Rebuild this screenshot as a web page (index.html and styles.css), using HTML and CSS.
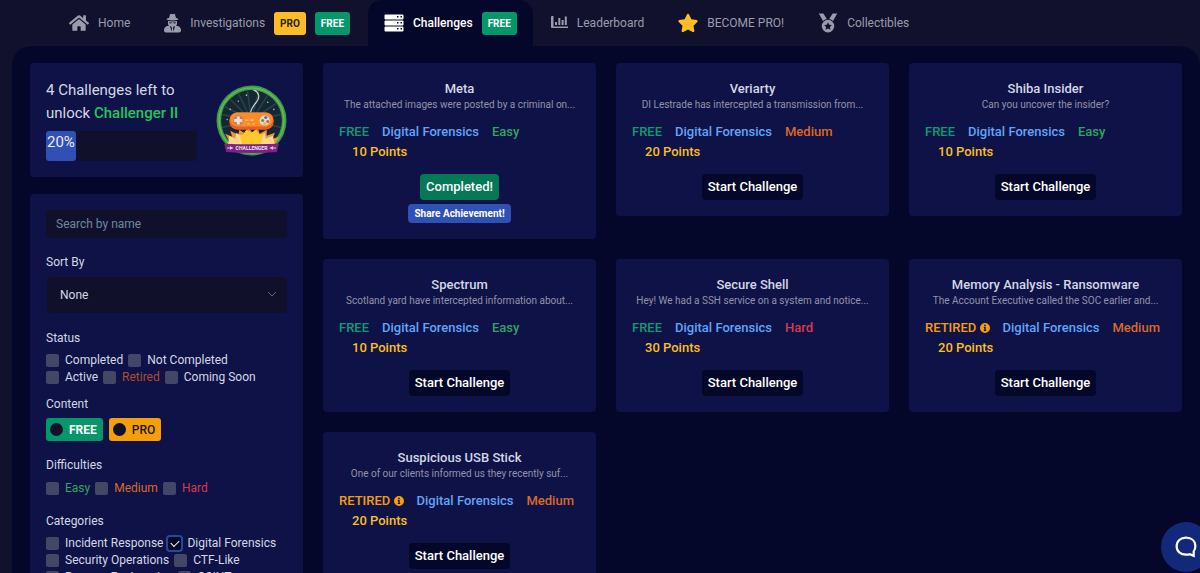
FILE: index.html
```html
<!DOCTYPE html>
<html lang="en">
<head>
    <meta charset="UTF-8">
    <meta name="viewport" content="width=device-width, initial-scale=1.0">
    <title>Challenges</title>
    <link rel="stylesheet" href="styles.css">
</head>
<body>
    <nav class="top-nav">
        <a class="nav-item" href="#home">
            <svg class="icon" viewBox="0 0 576 512"><path d="M280.37 148.26L96 300.11V464a16 16 0 0 0 16 16l112.06-.29a16 16 0 0 0 15.92-16V368a16 16 0 0 1 16-16h64a16 16 0 0 1 16 16v95.64a16 16 0 0 0 16 16.05L464 480a16 16 0 0 0 16-16V300L295.67 148.26a12.19 12.19 0 0 0-15.3 0zM571.6 251.47L488 182.56V44.05a12 12 0 0 0-12-12h-56a12 12 0 0 0-12 12v72.61L318.47 43a48 48 0 0 0-61 0L4.34 251.47a12 12 0 0 0-1.6 16.9l25.5 31A12 12 0 0 0 45.15 301l235.22-193.74a12.19 12.19 0 0 1 15.3 0L530.9 301a12 12 0 0 0 16.9-1.6l25.5-31a12 12 0 0 0-1.7-16.93z"/></svg>
            Home
        </a>
        <a class="nav-item" href="#investigations">
            <svg class="icon icon-narrow" viewBox="0 0 17 20"><path d="M5 5 6 1.4Q6.500.200 8.500 1.200 10.500.200 11 1.400L12 5Q14.500 5.500 14.500 6.200 14 7.200 8.500 7.400 3 7.200 2.500 6.200 2.500 5.500 5 5z"/><path fill-rule="evenodd" d="M4 8q4.500.8 9 0v2.500q0 1.500-1 2.500h2q3 1 3 4.500 0 2-2 2H2q-2 0-2-2Q0 14 3 13h2q-1-1-1-2.500zm1 1.200q.5 1.800 2 1.300l1.200-1h.6l1.200 1q1.500.5 2-1.300-3.500.5-7 0zM6 13l1.500 5.500.5-3.500-.7-1.500zm5 0-1.300.5L9 15l.5 3.500z"/></svg>
            Investigations
            <span class="badge badge-pro">PRO</span>
            <span class="badge badge-free">FREE</span>
        </a>
        <a class="nav-item active" href="#challenges">
            <svg class="icon" viewBox="0 0 20 20"><path fill-rule="evenodd" d="M1.500 1.500h17q1 0 1 1v3q0 1-1 1h-17q-1 0-1-1v-3q0-1 1-1zM13 3v1.500h1.500V3zM16.500 3v1.500H18V3zM1.500 7.500h17q1 0 1 1v3q0 1-1 1h-17q-1 0-1-1v-3q0-1 1-1zM13 9v1.500h1.500V9zM16.500 9v1.500H18V9zM1.500 13.500h17q1 0 1 1v3q0 1-1 1h-17q-1 0-1-1v-3q0-1 1-1zM13 15v1.500h1.500V15zM16.500 15v1.500H18V15z"/></svg>
            Challenges
            <span class="badge badge-free">FREE</span>
        </a>
        <a class="nav-item" href="#leaderboard">
            <svg class="icon icon-narrow" viewBox="0 0 17 20"><path d="M1 3h1.500v10.500H17V15H1q-1 0-1-1V4q0-1 1-1zM4 9h2v3H4zM7.300 5h2v7h-2zM10.600 7h2v5h-2zM13.800 3.500h2V12h-2z"/></svg>
            Leaderboard
        </a>
        <a class="nav-item" href="#pro">
            <svg class="icon icon-star" viewBox="10 0 556 512"><path d="M259.3 17.8L194 150.2 47.900 171.500c-26.200 3.800-36.700 36.100-17.700 54.600l105.700 103-25 145.500c-4.500 26.300 23.200 46 46.400 33.700L288 439.600l130.700 68.700c23.200 12.200 50.900-7.400 46.400-33.700l-25-145.500 105.700-103c19-18.500 8.500-50.800-17.700-54.600L382 150.200 316.700 17.800c-11.700-23.600-45.600-23.900-57.400 0z"/></svg>
            BECOME PRO!
        </a>
        <a class="nav-item" href="#collectibles">
            <svg class="icon" viewBox="0 0 20 20"><path d="M.8.500h4.600L8.800 6Q6.500 6.500 5 8zM19.200.500h-4.600L11.200 6q2.300.5 3.800 2z"/><path fill-rule="evenodd" d="M10 6.800a6.300 6.300 0 1 1 0 12.600 6.300 6.300 0 0 1 0-12.600zm0 2.500-1.200 2.400-2.700.4 2 1.900-.5 2.700 2.400-1.300 2.400 1.300-.5-2.700 2-1.900-2.700-.4z"/></svg>
            Collectibles
        </a>
    </nav>

    <main class="content">
        <aside class="sidebar">
            <section class="panel progress-panel">
                <div class="progress-info">
                    <p>4 Challenges left to<br>unlock <strong>Challenger II</strong></p>
                    <div class="progress-bar">
                        <div class="progress-fill" style="width: 20%">20%</div>
                    </div>
                </div>
                <svg class="challenger-badge" viewBox="0 0 70 70">
                    <circle cx="35" cy="35" r="34.500" fill="#3c9b4c"/>
                    <circle cx="35" cy="35" r="32" fill="none" stroke="#67b94d" stroke-width="1.500"/>
                    <circle cx="35" cy="35" r="30" fill="#152733"/>
                    <g stroke="#29434a" stroke-width="1.500">
                        <path d="M35 35 14 14M35 35 22 8M35 35 31 6M35 35 42 6M35 35 51 10M35 35 59 18M35 35 64 29M35 35 6 29M35 35 8 21M35 35 6 42M35 35 64 42"/>
                    </g>
                    <g fill="#9cc8d8">
                        <circle cx="14" cy="24" r=".8"/><circle cx="22" cy="16" r=".7"/><circle cx="30" cy="10" r=".8"/><circle cx="51" cy="17" r=".8"/><circle cx="57" cy="24" r=".8"/><circle cx="11" cy="34" r=".7"/>
                    </g>
                    <path d="M34 27q1-4 4-8 5-5 4-9-1-4-5-5" fill="none" stroke="#c4d4d8" stroke-width="1.200"/>
                    <path d="M12 59 13 55 9 48l7 3-2-6 8 4 1-5 6 4 3-6 4 5 5-5 2 6 7-4v6l8-3-2 6 6-2-4 7 1 4z" fill="#ef963d"/>
                    <path d="M12 59 13 50l6 3 1-6 6 4 3-6 5 6 5-6 3 6 6-4 1 6 7-3 2 9z" fill="#ffd98a"/>
                    <path d="m23 49 4 0 3-5 5 3 4-3 4 5 4-1-3 11H26z" fill="#ffc82f"/>
                    <rect x="13" y="27" width="44" height="17" rx="8" fill="#e7601f"/>
                    <rect x="14" y="27" width="42" height="14" rx="7" fill="#fb8c2c"/>
                    <circle cx="22" cy="35" r="5" fill="#e3733c"/>
                    <path d="M20.500 31h3v2.500H26v3h-2.500V39h-3v-2.500H18v-3h2.500z" fill="#d9e3ea"/>
                    <circle cx="48" cy="35" r="5" fill="#e8ddd0"/>
                    <circle cx="46" cy="35" r="1.500" fill="#3f9f68"/><circle cx="49" cy="32" r="1.500" fill="#4177bd"/><circle cx="51" cy="36" r="1.500" fill="#d45454"/><circle cx="48" cy="38" r="1.500" fill="#e7b638"/>
                    <path d="M29 34h3v1.500h-3zM34 34h3v1.500h-3zM31 38h2v1h-2zM36 38h2v1h-2z" fill="#ffd159"/>
                    <path d="M8 58q27 1 54 0l-2 8q-25 2-50 0z" fill="#7c2385"/>
                    <path d="M11 62h6M53 62h6" stroke="#ead4ef" stroke-width="1"/>
                    <path d="m14 60 2 2-2 2zM56 60l-2 2 2 2z" fill="#ead4ef"/>
                    <text x="35" y="64" text-anchor="middle" class="ribbon-text">CHALLENGER</text>
                </svg>
            </section>

            <form class="panel filters">
                <input class="search" type="text" placeholder="Search by name" aria-label="Search by name">
                <label class="filter-title" for="sort">Sort By</label>
                <div class="select-wrap">
                    <select id="sort">
                        <option>None</option>
                    </select>
                    <svg class="chevron" viewBox="0 0 8 8"><path d="m0 2 4 4 4-4"/></svg>
                </div>

                <h3 class="filter-title">Status</h3>
                <div class="options status-options">
                    <label><input type="checkbox">Completed</label>
                    <label><input type="checkbox">Not Completed</label>
                    <label><input type="checkbox">Active</label>
                    <label class="retired-label"><input type="checkbox">Retired</label>
                    <label><input type="checkbox">Coming Soon</label>
                </div>

                <h3 class="filter-title">Content</h3>
                <div class="content-options">
                    <label class="pill pill-free"><input type="radio" name="content">FREE</label>
                    <label class="pill pill-pro"><input type="radio" name="content">PRO</label>
                </div>

                <h3 class="filter-title">Difficulties</h3>
                <div class="options difficulty-options">
                    <label class="easy"><input type="checkbox">Easy</label>
                    <label class="medium"><input type="checkbox">Medium</label>
                    <label class="hard"><input type="checkbox">Hard</label>
                </div>

                <h3 class="filter-title">Categories</h3>
                <div class="options">
                    <label><input type="checkbox">Incident Response</label>
                    <label><input type="checkbox" checked>Digital Forensics</label>
                    <label><input type="checkbox">Security Operations</label>
                    <label><input type="checkbox">CTF-Like</label>
                    <label><input type="checkbox">Reverse Engineering</label>
                    <label><input type="checkbox">OSINT</label>
                </div>
            </form>
        </aside>

        <section class="challenge-grid">
            <article class="panel card">
                <h2>Meta</h2>
                <p>The attached images were posted by a criminal on...</p>
                <div class="tags">
                    <span class="free">FREE</span>
                    <span class="category">Digital Forensics</span>
                    <span class="easy">Easy</span>
                    <span class="points">10 Points</span>
                </div>
                <button class="btn btn-completed" type="button">Completed!</button>
                <button class="btn btn-share" type="button">Share Achievement!</button>
            </article>
            <article class="panel card">
                <h2>Veriarty</h2>
                <p>DI Lestrade has intercepted a transmission from...</p>
                <div class="tags">
                    <span class="free">FREE</span>
                    <span class="category">Digital Forensics</span>
                    <span class="medium">Medium</span>
                    <span class="points">20 Points</span>
                </div>
                <button class="btn" type="button">Start Challenge</button>
            </article>
            <article class="panel card">
                <h2>Shiba Insider</h2>
                <p>Can you uncover the insider?</p>
                <div class="tags">
                    <span class="free">FREE</span>
                    <span class="category">Digital Forensics</span>
                    <span class="easy">Easy</span>
                    <span class="points">10 Points</span>
                </div>
                <button class="btn" type="button">Start Challenge</button>
            </article>
            <article class="panel card">
                <h2>Spectrum</h2>
                <p>Scotland yard have intercepted information about...</p>
                <div class="tags">
                    <span class="free">FREE</span>
                    <span class="category">Digital Forensics</span>
                    <span class="easy">Easy</span>
                    <span class="points">10 Points</span>
                </div>
                <button class="btn" type="button">Start Challenge</button>
            </article>
            <article class="panel card">
                <h2>Secure Shell</h2>
                <p>Hey! We had a SSH service on a system and notice...</p>
                <div class="tags">
                    <span class="free">FREE</span>
                    <span class="category">Digital Forensics</span>
                    <span class="hard">Hard</span>
                    <span class="points">30 Points</span>
                </div>
                <button class="btn" type="button">Start Challenge</button>
            </article>
            <article class="panel card">
                <h2>Memory Analysis - Ransomware</h2>
                <p>The Account Executive called the SOC earlier and...</p>
                <div class="tags">
                    <span class="retired">RETIRED <svg class="info" viewBox="0 0 10 10"><path fill-rule="evenodd" d="M5 0a5 5 0 1 1 0 10A5 5 0 0 1 5 0zm-.8 1.800v1.400h1.600V1.800zM3.800 4v1h.5v2h-.5v1h2.400V7h-.5V4z"/></svg></span>
                    <span class="category">Digital Forensics</span>
                    <span class="medium">Medium</span>
                    <span class="points">20 Points</span>
                </div>
                <button class="btn" type="button">Start Challenge</button>
            </article>
            <article class="panel card">
                <h2>Suspicious USB Stick</h2>
                <p>One of our clients informed us they recently suf...</p>
                <div class="tags">
                    <span class="retired">RETIRED <svg class="info" viewBox="0 0 10 10"><path fill-rule="evenodd" d="M5 0a5 5 0 1 1 0 10A5 5 0 0 1 5 0zm-.8 1.800v1.400h1.600V1.800zM3.800 4v1h.5v2h-.5v1h2.400V7h-.5V4z"/></svg></span>
                    <span class="category">Digital Forensics</span>
                    <span class="medium">Medium</span>
                    <span class="points">20 Points</span>
                </div>
                <button class="btn" type="button">Start Challenge</button>
            </article>
        </section>
    </main>

    <button class="chat-button" type="button" aria-label="Open chat">
        <svg viewBox="0 0 20 20"><path d="M10 1.500c5 0 8.500 3 8.500 7.800 0 2-.7 3.700-1.500 4.700v4l-3.500-1.500c-1 .4-2.200.5-3.500.5-5 0-8.500-3-8.500-7.700S5 1.500 10 1.500z"/></svg>
    </button>
</body>
</html>
```
FILE: styles.css
```css
* {
    margin: 0;
    padding: 0;
    box-sizing: border-box;
}

body {
    background: #11112d;
    color: #d3d7e6;
    font-family: Roboto, sans-serif;
    font-size: 12px;
    line-height: 16px;
    overflow-x: hidden;
}

button,
input,
select {
    font: inherit;
    color: inherit;
    border: none;
}

/* Navigation */
.top-nav {
    display: flex;
    gap: 2px;
    height: 46px;
    padding-left: 53px;
}

.nav-item {
    display: flex;
    align-items: center;
    gap: 9px;
    padding: 0 16px;
    color: #9a9cae;
    text-decoration: none;
    white-space: nowrap;
}

.nav-item.active {
    background: #040729;
    border-radius: 14px 14px 0 0;
    color: #fff;
    font-weight: 500;
}

.icon {
    width: 20px;
    height: 20px;
    fill: currentColor;
}

.icon-narrow {
    width: 17px;
}

.icon-star {
    fill: #fbbf24;
}

.badge {
    padding: 0 6px;
    border-radius: 3px;
    font-size: 10px;
    font-weight: 700;
    line-height: 23px;
}

.badge-pro {
    background: #fbbc24;
    color: #27241f;
}

.badge-free {
    background: #059669;
    color: #fff;
}

/* Layout */
.content {
    display: grid;
    grid-template-columns: repeat(4, 1fr);
    gap: 20px;
    margin-left: 12px;
    padding: 17px 18px 20px 18px;
    background: #040729;
    border-radius: 20px 20px 0 0;
}

.challenge-grid {
    grid-column: span 3;
    display: grid;
    grid-template-columns: repeat(3, 1fr);
    gap: 20px;
    align-items: start;
    align-content: start;
}

.panel {
    padding: 16px;
    background: #0f1246;
    border-radius: 4px;
}

/* Progress */
.progress-panel {
    display: flex;
    align-items: center;
    gap: 19px;
    margin-bottom: 17px;
    font-size: 15px;
    line-height: 23px;
}

.progress-info {
    flex: 1;
}

.progress-info strong {
    color: #22c55e;
    font-weight: 500;
}

.progress-bar {
    height: 30px;
    margin-top: 6px;
    background: #10102b;
    border-radius: 3px;
}

.progress-fill {
    height: 100%;
    padding-left: 1px;
    background: #2f51b5;
    border-radius: 3px;
    color: #e8ebf7;
}

.challenger-badge {
    flex: none;
    width: 71px;
}

.ribbon-text {
    fill: #f3e6f5;
    font-size: 5px;
    font-weight: 700;
}

/* Filters */
.search {
    display: block;
    width: 100%;
    height: 28px;
    padding: 0 10px;
    background: #10102b;
    border-radius: 4px;
}

.search::placeholder {
    color: #6f86a5;
}

.filter-title {
    display: block;
    margin: 16px 0 6px;
    font-size: 12px;
    font-weight: 400;
}

.select-wrap {
    position: relative;
    margin-bottom: 17px;
    padding: 1px 0 0 1px;
}

.select-wrap select {
    display: block;
    appearance: none;
    width: 100%;
    height: 36px;
    padding: 0 13px;
    background: #10102b;
    border-radius: 4px;
}

.chevron {
    position: absolute;
    top: 14px;
    right: 11px;
    width: 8px;
    height: 8px;
    fill: none;
    stroke: #626477;
    pointer-events: none;
}

.options {
    display: flex;
    flex-wrap: wrap;
    column-gap: 5px;
    padding-right: 8px;
    line-height: 17px;
}

.status-options {
    margin-bottom: -6px;
}

.difficulty-options {
    padding-top: 1px;
}

.options label {
    display: flex;
    align-items: center;
    gap: 6px;
}

.options input {
    appearance: none;
    width: 13px;
    height: 13px;
    background: #414765;
    border-radius: 2px;
}

.options input:checked {
    display: grid;
    place-items: center;
    background: #040729;
    box-shadow: 0 0 0 2px #24499c;
}

.options input:checked::after {
    content: '';
    width: 7px;
    height: 4px;
    margin-bottom: 2px;
    border-left: 1px solid #fff;
    border-bottom: 1px solid #fff;
    transform: rotate(-45deg);
}

.content-options {
    display: flex;
    gap: 6px;
}

.pill {
    display: flex;
    align-items: center;
    gap: 6px;
    height: 23px;
    padding: 0 6px 0 4px;
    border-radius: 3px;
    font-weight: 700;
}

.pill input {
    appearance: none;
    width: 13px;
    height: 13px;
    background: #10102b;
    border-radius: 50%;
}

.pill-free {
    background: #059669;
    color: #fff;
}

.pill-pro {
    background: #f59e0b;
    color: #1b1720;
    font-weight: 500;
}

/* Challenge cards */
.card {
    display: flex;
    flex-direction: column;
    align-items: center;
    font-size: 13px;
    font-weight: 500;
    line-height: 20px;
}

.card h2 {
    font-size: 13px;
    font-weight: 500;
}

.card p {
    color: #9293aa;
    font-size: 10px;
    font-weight: 400;
    line-height: 12px;
    white-space: nowrap;
}

.tags {
    display: flex;
    flex-wrap: wrap;
    align-self: stretch;
    margin: 11px 0 12px;
}

.tags span + span {
    margin-left: 13px;
}

.free {
    color: #0c9b75;
}

.category {
    color: #60a5fa;
}

.easy {
    color: #2fa463;
}

.medium {
    color: #d96a27;
}

.hard {
    color: #d83a4c;
}

.points {
    color: #fbbf24;
}

.retired {
    color: #f59e0b;
}

.retired-label {
    color: #a9502e;
}

.info {
    width: 10px;
    height: 10px;
    fill: currentColor;
    vertical-align: -1px;
}

.btn {
    height: 26px;
    padding: 0 6px;
    background: #040729;
    border-radius: 4px;
    color: #fff;
    cursor: pointer;
}

.btn-completed {
    background: #047857;
}

.btn-share {
    height: 19px;
    margin-top: 4px;
    background: #2f51b5;
    font-size: 10px;
    font-weight: 700;
    line-height: 19px;
}

/* Chat */
.chat-button {
    position: fixed;
    right: -11px;
    bottom: 1px;
    width: 50px;
    height: 50px;
    background: #12297b;
    border-radius: 50%;
    cursor: pointer;
}

.chat-button svg {
    width: 22px;
    height: 22px;
    fill: none;
    stroke: #fff;
    stroke-width: 2;
    vertical-align: middle;
}
```
